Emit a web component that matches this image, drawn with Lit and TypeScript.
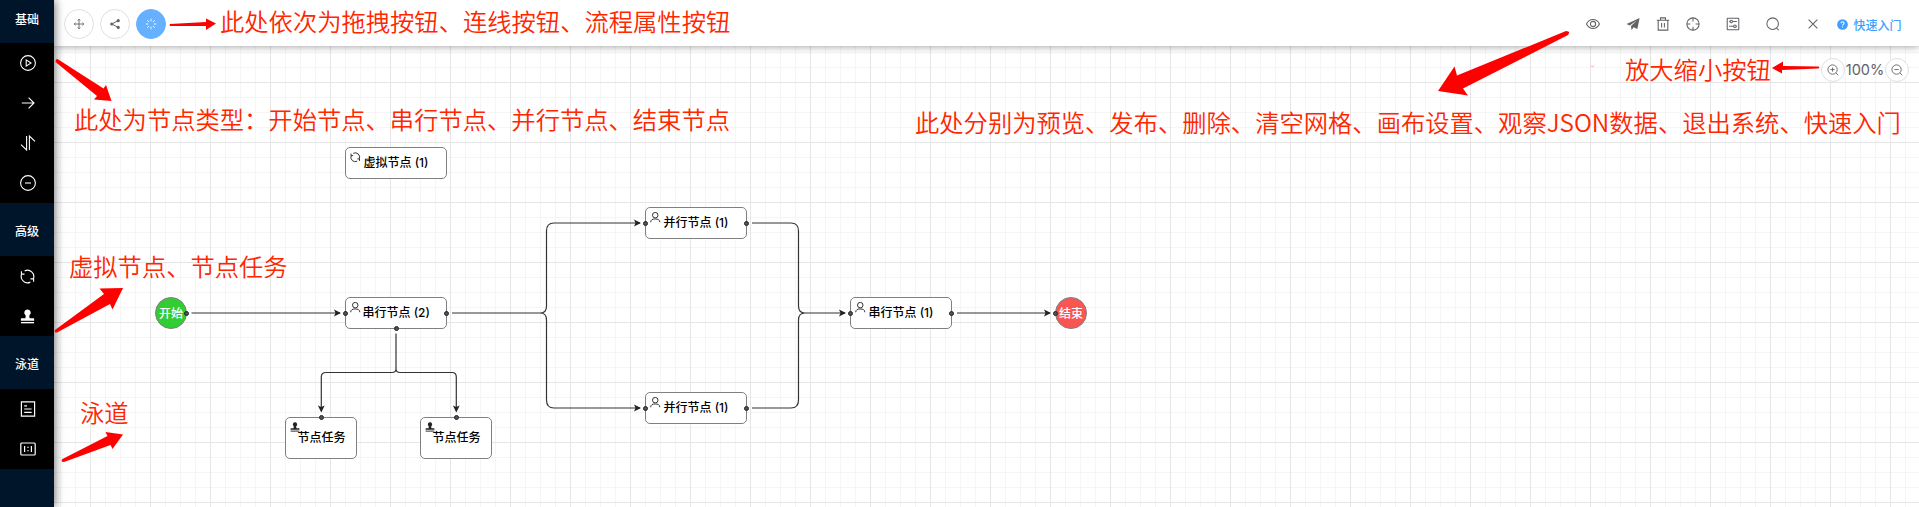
import { LitElement, html, svg, css } from "lit";
import { customElement } from "lit/decorators.js";

const I: Record<string, any> = {
  move: svg`<path d="M8 1.8V14.2M1.8 8H14.2M6.3 3.4L8 1.6L9.7 3.4M6.3 12.6L8 14.4L9.7 12.6M3.4 6.3L1.6 8L3.4 9.7M12.6 6.3L14.4 8L12.6 9.7"/>`,
  share: svg`<path d="M12.3 3.4L3.7 8L12.3 12.6" stroke-width="1.3"/><g fill="currentColor" stroke="none"><circle cx="12.3" cy="3.5" r="2.1"/><circle cx="3.7" cy="8" r="2.1"/><circle cx="12.3" cy="12.5" r="2.1"/></g>`,
  loading: svg`<path d="M8 1V4.4M8 11.6V15M1 8H4.4M11.6 8H15M3 3L5.4 5.4M10.6 10.6L13 13M13 3L10.6 5.4M5.4 10.6L3 13"/>`,
  play: svg`<circle cx="8" cy="8" r="7.4"/><path d="M6.2 4.9V11.1L11 8Z"/>`,
  right: svg`<path d="M1.8 8H14M8.6 2.6L14 8L8.6 13.4"/>`,
  swap: svg`<path d="M6.6 1V15L1 9.6M9.4 15V1L15 6.4"/>`,
  minus: svg`<circle cx="8" cy="8" r="7.4"/><path d="M5 8H11"/>`,
  sync: svg`<path d="M5 2A6.7 6.7 0 0 1 14.3 10.3M11 14A6.7 6.7 0 0 1 1.7 5.7M1.5 2.4V5.5H4.8M14.5 13.6V10.5H11.2"/>`,
  stamp: svg`<g fill="currentColor" stroke="none"><path d="M8 .4a3.5 3.5 0 0 1 2.3 6.1c-.6.6-.4 2.6.1 3.3h3.9c.5 0 .8.3.8.8v1.9H.9v-1.9c0-.5.3-.8.8-.8h3.9c.5-.7.7-2.7.1-3.3A3.5 3.5 0 0 1 8 .4z"/><path d="M1 13.8h14v1.5H1z"/></g>`,
  doc: svg`<path d="M1.4 .8H14.6V15.2H1.4zM4.2 4.8H7M4.2 8H11.6M4.2 11.3H11.6"/>`,
  ratio: svg`<rect x=".8" y="2" width="14.4" height="12" rx="1"/><path d="M4.6 5V11M11.4 5V11M8 5.8V7.1M8 9V10.3"/>`,
  eye: svg`<path d="M.6 8C3.7 1.2 12.3 1.2 15.4 8C12.3 14.8 3.7 14.8 .6 8Z"/><circle cx="8" cy="8" r="3"/>`,
  send: svg`<path d="M15.5 1L13 13.8L8.6 11.6L6.4 15L5.7 10.3L12.6 3.6L4.2 9.6L.7 8Z" fill="currentColor" stroke="none"/>`,
  trash: svg`<path d="M1 3.6H15M5.2 3.4V1H10.8V3.4M2.5 3.8V15H13.5V3.8M6.4 6.8V12M9.6 6.8V12"/>`,
  aim: svg`<circle cx="8" cy="8" r="7"/><path d="M8 1V5M8 11V15M1 8H5M11 8H15"/>`,
  setting: svg`<rect x="1.4" y="1.4" width="13.2" height="13.2" rx=".5"/><path d="M3.6 5.2H4.6M7.4 5.2H12.4M3.6 10.6H8.6M11.8 10.6H12.4"/><circle cx="6" cy="5.2" r="1.4"/><circle cx="10.2" cy="10.6" r="1.5"/>`,
  search: svg`<circle cx="7.6" cy="7.6" r="6.6"/><path d="M12 12.6L14.6 15"/>`,
  close: svg`<path d="M3 3L13 13M13 3L3 13"/>`,
  zoomin: svg`<circle cx="7.4" cy="7.4" r="6.2"/><path d="M11.9 11.9L15 15M4.6 7.4H10.2M7.4 4.6V10.2"/>`,
  zoomout: svg`<circle cx="7.4" cy="7.4" r="6.2"/><path d="M11.9 11.9L15 15M4.6 7.4H10.2"/>`,
  user: svg`<circle cx="8" cy="4.8" r="4.2"/><path d="M1 15.6C1.2 11.6 4 10.6 8 10.6S14.8 11.6 15 15.6"/>`,
  help: svg`<circle cx="8" cy="8" r="7.8" fill="currentColor" stroke="none"/><path d="M5.8 6.2C5.8 3.4 10.3 3.4 10.3 6.2C10.3 7.8 8 7.8 8 9.6M8 11V12.5" stroke="#fff" stroke-width="1.5"/>`,
};
const icon = (name: string, size: number, sw = 1) =>
  html`<svg class="icon" width=${size} height=${size} viewBox="0 0 16 16" fill="none" stroke="currentColor" stroke-width=${sw}>${I[name]}</svg>`;

interface Box { x: number; y: number; w: number; h: number; icon: string; label: string; tx: number; ports: string }
const boxes: Box[] = [
  { x: 345, y: 147, w: 102, h: 32, icon: "sync", label: "虚拟节点 (1)", tx: 18.5, ports: "" },
  { x: 345, y: 297, w: 102, h: 32, icon: "user", label: "串行节点 (2)", tx: 17.5, ports: "lrb" },
  { x: 645, y: 207, w: 102, h: 32, icon: "user", label: "并行节点 (1)", tx: 18.5, ports: "lr" },
  { x: 645, y: 392, w: 102, h: 32, icon: "user", label: "并行节点 (1)", tx: 18.5, ports: "lr" },
  { x: 850, y: 297, w: 102, h: 32, icon: "user", label: "串行节点 (1)", tx: 18.5, ports: "lr" },
  { x: 285, y: 417, w: 72, h: 42, icon: "stamp", label: "节点任务", tx: 12.5, ports: "t" },
  { x: 420, y: 417, w: 72, h: 42, icon: "stamp", label: "节点任务", tx: 12.5, ports: "t" },
];
const notes = [
  { x: 220, y: 7, t: "此处依次为拖拽按钮、连线按钮、流程属性按钮" },
  { x: 74, y: 105, t: "此处为节点类型：开始节点、串行节点、并行节点、结束节点" },
  { x: 915, y: 108, t: "此处分别为预览、发布、删除、清空网格、画布设置、观察JSON数据、退出系统、快速入门" },
  { x: 1625, y: 55, t: "放大缩小按钮" },
  { x: 69, y: 252, t: "虚拟节点、节点任务" },
  { x: 80, y: 398, t: "泳道" },
];

@customElement("app-root")
export class AppRoot extends LitElement {
  static styles = css`
    :host { display: block; font-family: "Noto Sans CJK SC", sans-serif; }
    .app { position: relative; display: flex; height: 507px; overflow: hidden; background: #fff; }
    .icon { display: block; flex: none; }
    .side { width: 54px; flex: none; background: #001529; color: #fff; z-index: 3; box-shadow: 1px 0 9px rgba(0,0,0,.55); }
    .title { height: 53px; display: flex; align-items: center; justify-content: center; font-size: 12px; font-weight: 500; line-height: 18px; padding-top: 3px; box-sizing: border-box; }
    .title.first { height: 43px; padding: 0 0 6px; }
    .group { background: #000; }
    .item { height: 40px; display: flex; align-items: center; justify-content: center; padding-left: 1px; box-sizing: border-box; }
    .main { flex: 1; display: flex; flex-direction: column; min-width: 0; }
    .bar { height: 46px; flex: none; display: flex; align-items: center; justify-content: space-between; background: #fff; z-index: 2; box-shadow: 0 1px 7px rgba(0,0,0,.35); padding: 2px 17.5px 0 10px; box-sizing: border-box; color: #606266; }
    .left { display: flex; gap: 6px; }
    .round { width: 30px; height: 30px; border-radius: 50%; border: 1px solid #dcdfe6; box-sizing: border-box; background: #fff; display: flex; align-items: center; justify-content: center; }
    .on { background: #66b1ff; border-color: #66b1ff; color: #fff; }
    .right { display: flex; align-items: center; }
    .g26 { margin-right: 26px; }
    .g16 { margin-right: 16px; }
    .g18 { margin-right: 17.5px; }
    .link { display: flex; align-items: center; gap: 5px; color: #409eff; font-size: 12px; font-weight: 500; }
    .canvas { position: relative; flex: 1; background-color: #fff;
      background-image: linear-gradient(90deg,#e6e6e6 1px,transparent 1px),linear-gradient(#e6e6e6 1px,transparent 1px),linear-gradient(90deg,#f5f5f5 1px,transparent 1px),linear-gradient(#f5f5f5 1px,transparent 1px);
      background-size: 60px 60px,60px 60px,15px 15px,15px 15px; background-position: 36px 36px,36px 36px,6px 6px,6px 6px; }
    .layer { position: absolute; left: -54px; top: -46px; width: 1919px; height: 507px; }
    .box { position: absolute; box-sizing: border-box; border: 1px solid #808080; border-radius: 5px; background: #fff; font-family: Inter, "Noto Sans CJK SC", sans-serif; font-size: 12px; color: #000; }
    .box .icon { position: absolute; left: 4px; top: 4px; color: #222; }
    .label { display: flex; align-items: center; height: 100%; box-sizing: border-box; padding-bottom: 3px; white-space: pre; font-weight: 450; }
    .port { position: absolute; width: 5px; height: 5px; box-sizing: border-box; border: 1px solid #222; border-radius: 50%; background: #456; }
    .l { left: -3px; top: 13px; } .r { right: -3px; top: 13px; }
    .b { left: 48px; bottom: -3px; } .t { left: 33px; top: -3px; }
    .circ { position: absolute; width: 32px; height: 32px; box-sizing: border-box; border: 1px solid #808080; border-radius: 50%; color: #fff; font-size: 12px; font-weight: 500; display: flex; align-items: center; justify-content: center; padding-bottom: 2px; white-space: nowrap; }
    .start { left: 155px; top: 297px; background: #32cd32; }
    .end { left: 1055px; top: 297px; background: #f85653; }
    .zoom { position: absolute; right: 10px; top: 12px; display: flex; align-items: center; gap: 2px; color: #606266; font: 14.5px/24px Inter, sans-serif; }
    .zoom .round { width: 24px; height: 24px; }
    .pct { width: 36px; display: flex; justify-content: center; }
    .notes { position: absolute; inset: 0; z-index: 5; pointer-events: none; }
    .note { position: absolute; color: #ff2600; font-size: 24.3px; line-height: 28px; font-weight: 350; white-space: nowrap; }
  `;
  render() {
    return html`<div class="app">
      <nav class="side">
        <div class="title first"><span>基础</span></div>
        <div class="group">${["play", "right", "swap", "minus"].map((n) => html`<div class="item">${icon(n, 16, 1.1)}</div>`)}</div>
        <div class="title"><span>高级</span></div>
        <div class="group">${["sync", "stamp"].map((n) => html`<div class="item">${icon(n, 15, 1.2)}</div>`)}</div>
        <div class="title"><span>泳道</span></div>
        <div class="group">${["doc", "ratio"].map((n) => html`<div class="item">${icon(n, 16, 1.2)}</div>`)}</div>
      </nav>
      <div class="main">
        <header class="bar">
          <div class="left">
            <div class="round">${icon("move", 12, 1.2)}</div>
            <div class="round">${icon("share", 12)}</div>
            <div class="round on">${icon("loading", 12, 1.2)}</div>
          </div>
          <div class="right">
            <span class="g26">${icon("eye", 14, 1.2)}</span>
            <span class="g16">${icon("send", 14)}</span>
            <span class="g16">${icon("trash", 14, 1.2)}</span>
            <span class="g26">${icon("aim", 14, 1.2)}</span>
            <span class="g26">${icon("setting", 14, 1.2)}</span>
            <span class="g26">${icon("search", 14, 1.2)}</span>
            <span class="g18">${icon("close", 14, 1.2)}</span>
            <div class="link">${icon("help", 11)}<span>快速入门</span></div>
          </div>
        </header>
        <main class="canvas">
          <div class="layer">
            <svg width="1919" height="507" fill="none" stroke="#333" stroke-width="1.2">
              <path d="M191.5 313H340M452 313H540.5Q546.5 313 546.5 306V231Q546.5 223 554 223H640M540.5 313Q546.5 313 546.5 320V400Q546.5 408 554 408H640M752 223H791Q798.5 223 798.5 231V306Q798.5 313 805 313H845M752 408H791Q798.5 408 798.5 400V320Q798.5 313 805 313M957 313H1050M396 333.5V369Q396 372.5 392 372.5H326Q321.3 372.5 321.3 377V411M396 369Q396 372.5 400 372.5H452Q456.3 372.5 456.3 377V411"/>
              <g fill="#222" stroke="none">${[[341, 313], [641, 223], [641, 408], [846, 313], [1051, 313]].map(([x, y]) => svg`<path d="M${x} ${y}l-7-3.4 1.5 3.4-1.5 3.4z"/>`)}
              ${[[321.3, 412.5], [456.3, 412.5]].map(([x, y]) => svg`<path d="M${x} ${y}l-3.4-7 3.4 1.5 3.4-1.5z"/>`)}</g>
            </svg>
            ${boxes.map((b) => html`<div class="box" style="left:${b.x}px;top:${b.y}px;width:${b.w}px;height:${b.h}px">
              ${icon(b.icon, b.icon === "stamp" ? 10 : 10.5, 1.4)}<div class="label" style="padding-left:${b.tx - 1}px">${b.label}</div>${[...b.ports].map((p) => html`<i class="port ${p}"></i>`)}</div>`)}
            <div class="circ start">开始<i class="port r"></i></div>
            <div class="circ end">结束<i class="port l"></i></div>
          </div>
          <div class="zoom"><div class="round">${icon("zoomin", 12, 1.2)}</div><span class="pct">100%</span><div class="round">${icon("zoomout", 12, 1.2)}</div></div>
        </main>
      </div>
      <div class="notes">
        <svg width="1919" height="507" fill="#f00">
          <path d="M170 24L206 22V18.5L216 23.5L206 30V26L170 26Q169 25 170 24Z"/>
          <path d="M57.5 59L103.5 88.5L106 85L111.5 101L94 99.5L97 96L55.5 62Q55.5 59 57.5 59Z"/>
          <path d="M1566 31Q1571 31 1568 35L1463 88.5L1468 95.5L1438 91L1454.5 66.5L1457 75.5Z"/>
          <path d="M1818.5 66.5L1783 66V61.5L1772 68L1782 73.5V70L1818.5 68.5Q1820 67.5 1818.5 66.5Z"/>
          <path d="M55 330L104 294L99.5 288.5L123 288L112.5 309.5L110 304L57 332.5Q54 333 55 330Z"/>
          <path d="M62.5 459L107.5 436L105.5 432L123 434.5L112.5 449L110.5 445L64 462Q60 462 62.5 459Z"/>
          <path d="M1591 65.5L1592.5 67L1594 65.5" fill="none" stroke="#f88" stroke-width=".8"/>
        </svg>
        ${notes.map((n) => html`<div class="note" style="left:${n.x}px;top:${n.y}px">${n.t}</div>`)}
      </div>
    </div>`;
  }
}
